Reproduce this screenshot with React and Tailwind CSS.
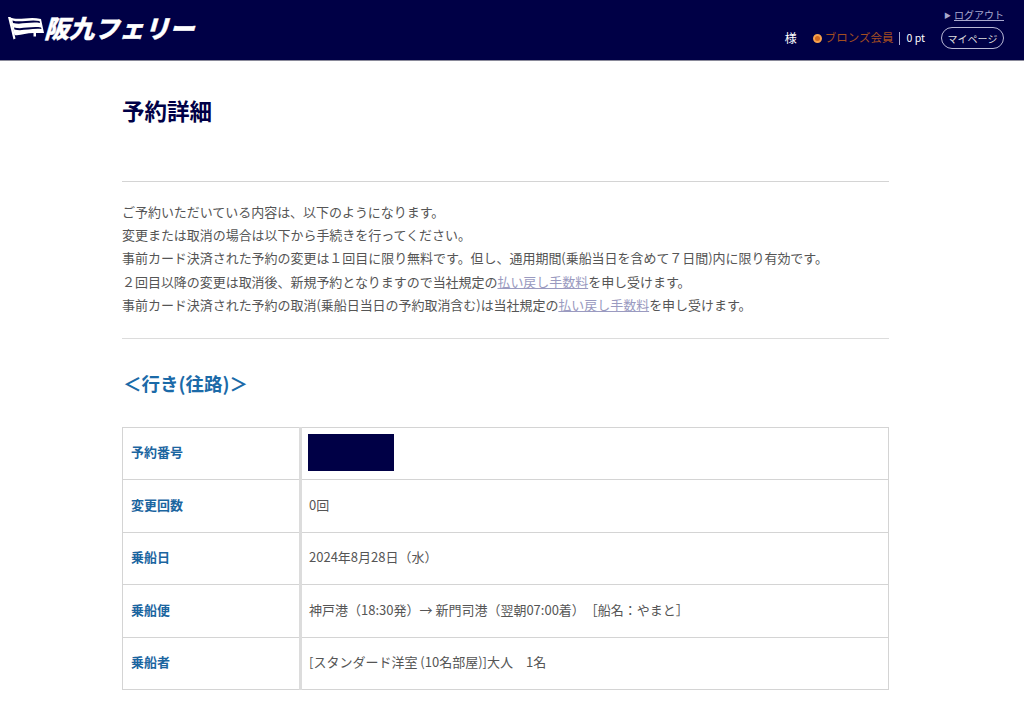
const font = "font-['Noto_Sans_CJK_JP','Noto_Sans',sans-serif] [text-spacing-trim:space-all]";

function Flag() {
  return (
    <svg width="37" height="26" viewBox="8 15 37 26" className="shrink-0">
      <path d="M8 17 L10.5 17 L15.5 38.5 L13.5 39.5 Z" fill="#fff" />
      <path d="M10 17.5 C19 21 29 16 41 19 L44 33 L36 33 L36 36.5 L33.5 36.5 L33.5 33 C26 33 20 36 14.5 35 Z" fill="#fff" />
      <path d="M12.5 20.5 C20 23 30 19 39.5 21 L40 23 C30 21.5 21 25 13 23 Z" fill="#000046" />
      <path d="M14 27.5 C22 29.5 31 26 41 27.5 L41.5 29 C31 28 22 31.5 14.5 29.5 Z" fill="#000046" />
    </svg>
  );
}

function Row({ label, children, plain }) {
  return (
    <tr className="h-[52.5px]">
      <th className="w-[178px] border border-[#d4d4d4] border-r-[3px] border-r-[#dcdcdc] bg-white pb-[3px] pl-2 text-left align-middle text-[13px] font-bold text-[#1b659f]">
        {label}
      </th>
      <td className={`border border-[#d4d4d4] pl-[7px] align-middle text-[13px] text-[#555] ${plain ? "pb-[2px]" : "pb-[3px]"}`}>{children}</td>
    </tr>
  );
}

export default function App() {
  return (
    <div className={`${font} h-[703px] overflow-hidden bg-white text-[#555]`}>
      <header className="flex h-[61px] items-stretch justify-between border-b border-b-[#8a8a9a] bg-[#000046] pl-2 pr-5">
        <div className="flex items-center gap-[2px] pb-[5px]">
          <Flag />
          <span className="skew-x-[-16deg] whitespace-nowrap text-[25px] font-black leading-none text-white [-webkit-text-stroke:0.4px_white]">
            阪九フェリー
          </span>
        </div>
        <div className="flex flex-col items-end pt-[8px]">
          <div className="flex items-center gap-[3px] text-[10px] leading-[14px] text-[#a9a9cf]">
            <span className="text-[7px]">▶</span>
            <a className="underline">ログアウト</a>
          </div>
          <div className="mt-[5px] flex items-center text-[11px] text-white">
            <span className="text-[12px]">様</span>
            <span className="ml-[16px] h-[9px] w-[9px] rounded-full border-2 border-[#f6a04d] bg-[#d2691e]" />
            <span className="ml-[3px] text-[11.5px] text-[#a34e20]">ブロンズ会員</span>
            <span className="ml-[5px] h-[13px] w-px bg-[#a9a9cf]" />
            <span className="ml-[7px] text-[10.5px]">0 pt</span>
            <span className="ml-[16px] flex h-[22px] w-[63px] items-center justify-center rounded-full border border-[#b9b9d6] text-[10px] text-[#ddd]">
              マイページ
            </span>
          </div>
        </div>
      </header>

      <main className="ml-[122px] w-[767px]">
        <h1 className="pt-[34px] text-[22.5px] font-bold leading-[30px] text-[#000046]">予約詳細</h1>
        <div className="mt-[56px] border-t border-[#d4d4d4] pb-[22px] pt-[18px] text-[13px] leading-[23.2px] tracking-[-0.04px]">
          <p>ご予約いただいている内容は、以下のようになります。</p>
          <p>変更または取消の場合は以下から手続きを行ってください。</p>
          <p>事前カード決済された予約の変更は１回目に限り無料です。但し、通用期間(乗船当日を含めて７日間)内に限り有効です。</p>
          <p>
            ２回目以降の変更は取消後、新規予約となりますので当社規定の
            <a className="text-[#9a9ac0] underline">払い戻し手数料</a>を申し受けます。
          </p>
          <p>
            事前カード決済された予約の取消(乗船日当日の予約取消含む)は当社規定の
            <a className="text-[#9a9ac0] underline">払い戻し手数料</a>を申し受けます。
          </p>
        </div>
        <div className="border-t border-[#dcdcdc]" />
        <h2 className="ml-[1px] mt-[29px] text-[18.5px] font-bold leading-[30px] text-[#1b6aa8]">＜行き(往路)＞</h2>
        <table className="mt-[28.5px] w-full border-collapse">
          <tbody>
            <Row label="予約番号" plain>
              <div className="-ml-[1px] h-[37px] w-[86px] bg-[#000046]" />
            </Row>
            <Row label="変更回数">0回</Row>
            <Row label="乗船日">2024年8月28日（水）</Row>
            <Row label="乗船便">神戸港（18:30発）→ 新門司港（翌朝07:00着）［船名：やまと］</Row>
            <Row label="乗船者">[スタンダード洋室 (10名部屋)]大人　1名</Row>
          </tbody>
        </table>
      </main>
    </div>
  );
}
